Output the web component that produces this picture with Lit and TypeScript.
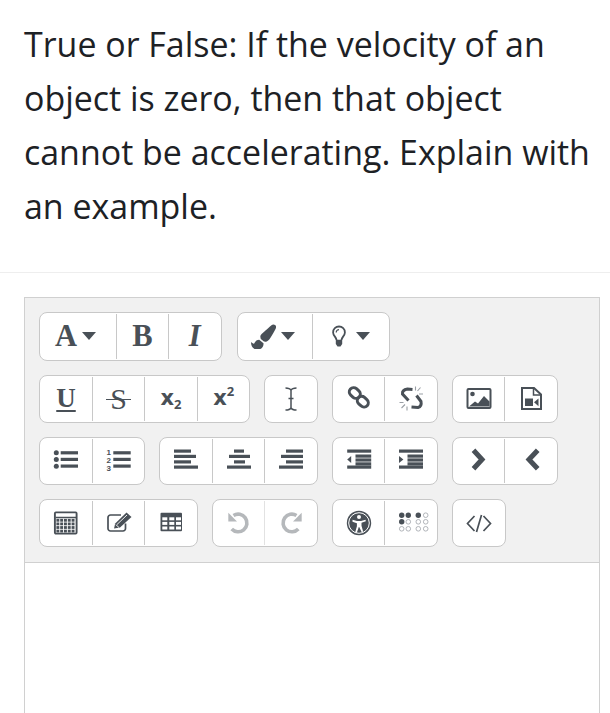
import { LitElement, html, css, svg } from "lit";
import { customElement } from "lit/decorators.js";

const D = "#495057";
const G = "#b5b8bb";
const lines = (rows: [number, number, number][]) =>
  rows.map(([x, w, y]) => svg`<rect x=${x} y=${y} width=${w} height="3.2" fill=${D}></rect>`);
const dot = (x: number, y: number, on: boolean) =>
  on
    ? svg`<circle cx=${x} cy=${y} r="2.7" fill=${D}></circle>`
    : svg`<circle cx=${x} cy=${y} r="2.3" fill="none" stroke="#a9adb2" stroke-width="0.9"></circle>`;

const icons: Record<string, unknown> = {
  brush: svg`<g transform="translate(0 1.500) scale(0.049)"><path fill=${D} d="M167.02 309.34c-40.12 2.58-76.53 17.86-97.19 72.3-2.35 6.21-8 9.98-14.59 9.98-11.11 0-45.46-27.67-55.25-34.35C0 439.62 37.93 512 128 512c75.86 0 128-43.77 128-120.19 0-3.11-.65-6.08-.97-9.13l-88.01-73.34zM457.89 0c-15.16 0-29.37 6.71-40.21 16.45C213.27 199.05 192 203.34 192 257.09c0 13.7 3.25 26.76 8.73 38.7l63.82 53.18c7.21 1.8 14.64 3.03 22.39 3.03 62.11 0 98.11-45.47 211.16-256.46 7.38-14.35 13.9-29.85 13.9-45.99C512 20.64 486 0 457.89 0z"></path></g>`,
  bulb: svg`<path d="M4.500 17c0-2.800-3.400-4.200-3.400-7.600a5.900 5.900 0 0 1 11.800 0c0 3.400-3.400 4.800-3.400 7.600" fill="none" stroke=${D} stroke-width="1.800"></path><path d="M3.800 16.800h6.400v4.200l-1.700 2.500h-3l-1.700-2.500z" fill=${D}></path><path d="M4.200 9.500A2.800 2.800 0 0 1 7 6.700" fill="none" stroke=${D} stroke-width="1.200"></path>`,
  cursor: svg`<path d="M7.500 2c2 0 4.500.3 5.500 2.200 1-1.900 3.500-2.200 5.500-2.200M13 4.200v17.600M7.500 24c2 0 4.500-.3 5.500-2.200 1 1.900 3.500 2.200 5.500 2.200M10.500 12.500h5" fill="none" stroke=${D} stroke-width="1.500"></path>`,
  link: svg`<g fill="none" stroke=${D} stroke-width="3"><rect x="2.900" y="2.700" width="11.800" height="8.600" rx="4.300" transform="rotate(42 8.800 7)"></rect><rect x="10.900" y="11.400" width="11.800" height="8.600" rx="4.300" transform="rotate(42 16.800 15.700)"></rect></g>`,
  unlink: svg`<g fill="none" stroke=${D} stroke-width="3"><path d="M14.500 3.500 9.500 3Q4 3.800 4.500 8L10.500 14.500"></path><path d="M18.500 9.500 23 15.500Q24 20.500 20 21.500L13.500 21"></path></g><g stroke="#9a9fa5" stroke-width="1.100"><path d="M17.500.5v4M22.500 1.500l-3 3.500M25 8h-4M1.500 16.500h4M3.500 22l3.500-3.500M9 24.500v-4"></path></g>`,
  image: svg`<rect x="2.500" y="3" width="23" height="19" rx="1" fill="none" stroke=${D} stroke-width="2"></rect><circle cx="7.500" cy="8" r="2.300" fill=${D}></circle><path d="M4 20.500l6-5 3 2 6-7.500 5.500 5.500v5z" fill=${D}></path>`,
  video: svg`<path d="M4 2h12l7 6.500V23H4z" fill="none" stroke=${D} stroke-width="2"></path><path d="M15.500 2v7h7" fill="none" stroke=${D} stroke-width="1.500"></path><rect x="7" y="12.500" width="8" height="7.500" fill=${D}></rect><path d="M16 16.200l4.500-3.800v7.800z" fill=${D}></path>`,
  ul: svg`<circle cx="3.300" cy="4.800" r="2.500" fill=${D}></circle><circle cx="3.300" cy="11.500" r="2.500" fill=${D}></circle><circle cx="3.300" cy="18.200" r="2.500" fill=${D}></circle>${lines([[7.700, 17.300, 3.200], [7.700, 17.300, 9.800], [7.700, 17.300, 16.500]])}`,
  ol: svg`${lines([[7.300, 17.400, 3.200], [7.300, 17.400, 9.800], [7.300, 17.400, 16.500]])}<g font-family="'Liberation Sans',sans-serif" font-size="8" font-weight="700" fill=${D}><text x="0.500" y="7">1</text><text x="0.500" y="15">2</text><text x="0.500" y="23">3</text></g>`,
  left: svg`${lines([[1, 17, 1.500], [1, 22, 6.800], [1, 17, 12.300], [1, 24, 17.500]])}`,
  center: svg`${lines([[8, 10, 1.500], [3, 21, 6.800], [8, 11, 12.300], [1, 24, 17.500]])}`,
  right: svg`${lines([[8, 17, 1.500], [3, 22, 6.800], [8, 17, 12.300], [1, 24, 17.500]])}`,
  outdent: svg`${lines([[1.200, 24, 1.500], [9.500, 15.700, 6.500], [9.500, 15.700, 10.400], [9.500, 15.700, 14.300], [1.200, 24, 17.500]])}<path d="M1.200 11.500l4-3.600v7.200z" fill=${D}></path>`,
  indent: svg`${lines([[1, 24, 1.500], [9.500, 15.500, 6.500], [9.500, 15.500, 10.400], [9.500, 15.500, 14.300], [1, 24, 17.500]])}<path d="M5.400 11.500l-4.400-3.600v7.200z" fill=${D}></path>`,
  chevR: svg`<path d="M7.500 2.300 16 11.500l-8.500 9.200" fill="none" stroke=${D} stroke-width="5"></path>`,
  chevL: svg`<path d="M19.700 2.300 11 11.500l8.700 9.200" fill="none" stroke=${D} stroke-width="5"></path>`,
  calc: svg`<rect x="1.900" y="2.400" width="21.700" height="21.200" rx="1" fill="none" stroke=${D} stroke-width="1.900"></rect><path d="M2.500 7.500h20.500" stroke=${D} stroke-width="1.500"></path><g fill=${D}>${[9.400, 13, 16.600, 20.200].flatMap((y) =>
    [3.400, 7.200, 11, 14.800, 18.600].map((x) => svg`<rect x=${x} y=${y - 0.5} width="2.900" height="2.800"></rect>`)
  )}</g>`,
  edit: svg`<path d="M19.500 13.500v5a2.500 2.500 0 0 1-2.500 2.500H4.500A2.500 2.500 0 0 1 2 18.500V7.500A2.500 2.500 0 0 1 4.500 5H15" fill="none" stroke=${D} stroke-width="1.700"></path><path d="M8 18.500l1.200-5L20.500 2.500 25.500 7 14 17.500z" fill=${D}></path><path d="M11 14.500 21 5M9.700 14.500l3.300 3" stroke="#fff" stroke-width="0.900"></path>`,
  table: svg`<rect x="2.500" y="2.800" width="21.500" height="18.500" rx="1" fill=${D}></rect><g fill="#fff">${[7.300, 11.900, 16.500].flatMap((y) =>
    [4.300, 11.300, 18].map((x) => svg`<rect x=${x} y=${y} width="5" height="3"></rect>`)
  )}</g>`,
  undo: svg`<path d="M7.500 5.500A8.800 8.800 0 1 1 5.700 19" fill="none" stroke=${G} stroke-width="3.600"></path><path d="M2.300 2.800v8.700H11z" fill=${G}></path>`,
  redo: svg`<path d="M18.500 5.500A8.800 8.800 0 1 0 20.300 19" fill="none" stroke=${G} stroke-width="3.600"></path><path d="M23.700 2.800v8.700H15z" fill=${G}></path>`,
  a11y: svg`<circle cx="13" cy="13" r="12.200" fill=${D}></circle><circle cx="13" cy="13" r="10.300" fill="none" stroke="#fff" stroke-width="1"></circle><circle cx="13" cy="7" r="2" fill="#fff"></circle><path d="M6.500 9.800l4.500 1.200h4l4.500-1.200.4 1.400-4.400 1.500v3l1.700 6-1.600.4L13.200 17h-.4l-2 5.700-1.600-.4 1.700-6v-3l-4.400-1.500z" fill="#fff"></path>`,
  braille: svg`${[
    [8.700, 5.200, 1], [15.300, 5.200, 1], [25.300, 5.200, 1], [32.700, 5.200, 0],
    [8.700, 11.800, 1], [15.300, 11.800, 0], [25.300, 11.800, 0], [32.700, 11.800, 0],
    [8.700, 18.800, 0], [15.300, 18.800, 0], [25.300, 18.800, 0], [32.700, 18.800, 0],
  ].map(([x, y, o]) => dot(x, y, !!o))}`,
  code: svg`<path d="M8.500 6l-7 7.500 7 7.500M17.500 6l7 7.500-7 7.500M15.500 5l-5 17" fill="none" stroke=${D} stroke-width="1.700"></path>`,
};

type Btn = { w: number; t?: string; i?: string; vw?: number; c?: boolean; cls?: string; sub?: string; sup?: string };

const rows: { cls?: string; groups: Btn[][] }[] = [
  {
    cls: "first",
    groups: [
      [{ w: 76, t: "A", c: true, cls: "serif pad" }, { w: 52, t: "B", cls: "serif" }, { w: 52.5, t: "I", cls: "serif it" }],
      [{ w: 74, i: "brush", vw: 25, c: true, cls: "pad" }, { w: 77, i: "bulb", vw: 14, c: true, cls: "wide" }],
    ],
  },
  {
    groups: [
      [{ w: 52, t: "U", cls: "serif u" }, { w: 52, t: "S", cls: "serif s" }, { w: 53, t: "x", sub: "2", cls: "sans" }, { w: 52.4, t: "x", sup: "2", cls: "sans" }],
      [{ w: 52, i: "cursor" }],
      [{ w: 51, i: "link" }, { w: 53, i: "unlink" }],
      [{ w: 51, i: "image", vw: 28 }, { w: 53, i: "video" }],
    ],
  },
  {
    groups: [
      [{ w: 52, i: "ul" }, { w: 52.3, i: "ol" }],
      [{ w: 52, i: "left" }, { w: 52, i: "center" }, { w: 53, i: "right" }],
      [{ w: 51, i: "outdent" }, { w: 53, i: "indent" }],
      [{ w: 51, i: "chevR" }, { w: 53, i: "chevL" }],
    ],
  },
  {
    groups: [
      [{ w: 52, i: "calc" }, { w: 52, i: "edit" }, { w: 53, i: "table" }],
      [{ w: 51, i: "undo", cls: "off" }, { w: 53, i: "redo", cls: "off" }],
      [{ w: 51, i: "a11y" }, { w: 53, i: "braille", vw: 36 }],
      [{ w: 52, i: "code" }],
    ],
  },
];

@customElement("app-root")
export class AppRoot extends LitElement {
  static styles = css`
    :host { display: block; height: 713px; overflow: hidden; background: #fff; color: #1d2125; font-family: "Open Sans", sans-serif; }
    .q { margin: 0; padding: 17px 10px 39px 24px; font-size: 33.95px; line-height: 54px; border-bottom: 1px solid #eeeeee; }
    .editor { margin: 24px 10px 0 24px; border: 1px solid #d0d0d0; border-bottom: 0; height: 500px; }
    .toolbar { background: #f1f1f1; border-bottom: 1px solid #d0d0d0; padding: 14px 14px 14.5px; display: flex; flex-direction: column; gap: 13.5px; }
    .row { display: flex; gap: 14px; }
    .row.first { gap: 15.5px; margin-bottom: 0.5px; }
    .group { display: flex; height: 48.5px; background: #fff; border: 1px solid #c8c8c8; border-radius: 8px; box-sizing: border-box; padding: 1px 0; }
    .btn { box-sizing: border-box; display: flex; align-items: center; justify-content: center; gap: 5px; color: #495057; border-left: 1px solid #c8c8c8; }
    .btn:first-child { border-left: 0; }
    .btn.off + .btn.off { border-left-color: #e2e2e2; }
    .btn.pad { padding-right: 5px; }
    .btn.wide { gap: 10px; }
    svg.ic { display: block; flex: none; }
    .caret { width: 14px; height: 8px; flex: none; }
    .t { font-weight: 700; line-height: 1; position: relative; }
    .serif { font-family: "Liberation Serif", serif; font-size: 30.5px; }
    .it { font-style: italic; }
    .u { font-size: 27px; text-decoration: underline; text-decoration-thickness: 2px; text-underline-offset: 3px; }
    .s { font-weight: 400; font-size: 30px; }
    .s::after { content: ""; position: absolute; left: -4px; right: -4px; top: 50%; height: 1.6px; background: #495057; }
    .sans { font-family: "DejaVu Sans", sans-serif; font-size: 21px; }
    .t sub, .t sup { font-size: 13px; line-height: 0; font-family: "Open Sans", sans-serif; }
    .t sub { vertical-align: -4px; }
    .t sup { vertical-align: 9px; }
  `;

  renderBtn(b: Btn) {
    const vw = b.vw ?? 26;
    const cls = b.cls ?? "";
    const own = ["off", "pad", "wide"].filter((c) => cls.split(" ").includes(c)).join(" ");
    return html`<div class="btn ${own}" style="width:${b.w}px">
      ${b.t
        ? html`<span class="t ${cls}">${b.t}${b.sub ? html`<sub>${b.sub}</sub>` : ""}${b.sup ? html`<sup>${b.sup}</sup>` : ""}</span>`
        : ""}
      ${b.i
        ? html`<svg class="ic" width=${vw} height="26" viewBox="0 0 ${vw} 26">${icons[b.i]}</svg>`
        : ""}
      ${b.c ? html`<svg class="caret" viewBox="0 0 14 8"><path d="M0 0h14L7 8z" fill=${D}></path></svg>` : ""}
    </div>`;
  }

  render() {
    return html`
      <p class="q">True or False: If the velocity of an object is zero, then that object cannot be accelerating. Explain with an example.</p>
      <div class="editor">
        <div class="toolbar">
          ${rows.map(
            (r) => html`<div class="row ${r.cls ?? ""}">${r.groups.map((g) => html`<div class="group">${g.map((b) => this.renderBtn(b))}</div>`)}</div>`
          )}
        </div>
      </div>
    `;
  }
}
